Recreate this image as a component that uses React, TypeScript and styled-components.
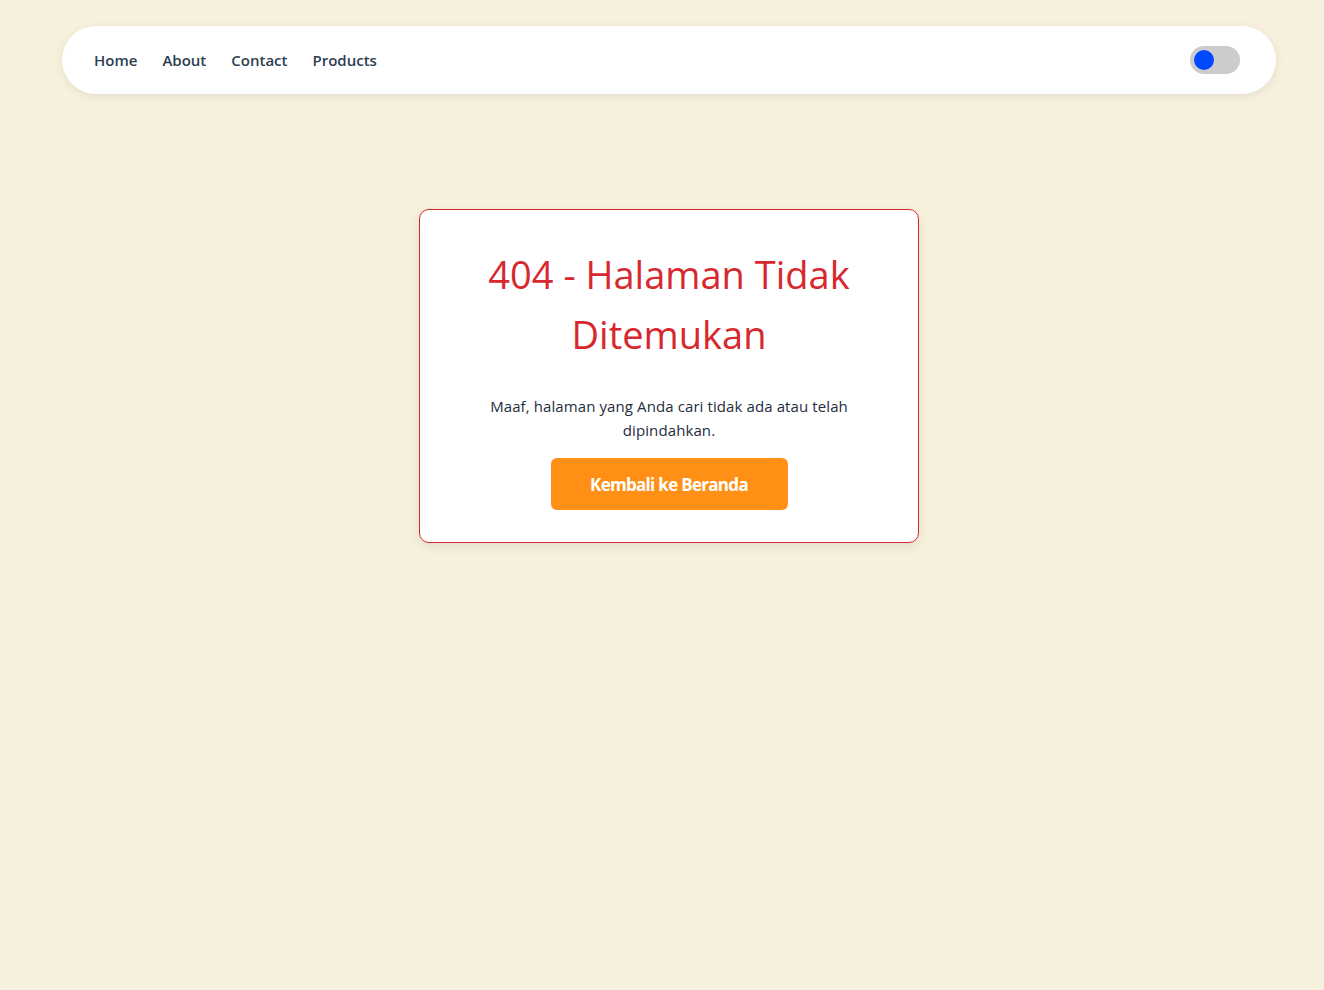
import styled, { createGlobalStyle } from 'styled-components';

const GlobalStyle = createGlobalStyle`
  html, body {
    margin: 0;
    padding: 0;
    background: #f6f0dd;
    font-family: "Open Sans", "Noto Sans", sans-serif;
  }
  * { box-sizing: border-box; }
`;

const Page = styled.div`
  min-height: 990px;
  padding: 26px 48px 0 62px;
`;

const Nav = styled.nav`
  height: 68px;
  width: 1214px;
  background: #ffffff;
  border-radius: 34px;
  box-shadow: 0 2px 10px rgba(0, 0, 0, 0.08);
  display: flex;
  align-items: center;
  justify-content: space-between;
  padding: 0 36px 0 32px;
`;

const Links = styled.ul`
  list-style: none;
  margin: 0;
  padding: 0;
  display: flex;
  gap: 25px;
`;

const Link = styled.a`
  font-size: 15px;
  font-weight: 600;
  color: #2c3e50;
  text-decoration: none;
`;

const Toggle = styled.label<{ $on: boolean }>`
  width: 50px;
  height: 28px;
  border-radius: 14px;
  background: #cccccc;
  display: flex;
  align-items: center;
  justify-content: ${({ $on }) => ($on ? 'flex-end' : 'flex-start')};
  padding: 0 4px;
`;

const Knob = styled.span`
  width: 20px;
  height: 20px;
  border-radius: 50%;
  background: #0049ff;
`;

const Main = styled.main`
  display: flex;
  justify-content: center;
  padding-top: 115px;
`;

const Card = styled.section`
  width: 500px;
  background: #ffffff;
  border: 1px solid #d7282f;
  border-radius: 10px;
  box-shadow: 0 4px 12px rgba(0, 0, 0, 0.08);
  padding: 34px 48px 32px;
  display: flex;
  flex-direction: column;
  align-items: center;
  text-align: center;
`;

const Title = styled.h1`
  margin: 0 0 30px;
  font-size: 38px;
  line-height: 60px;
  font-weight: 400;
  color: #d7282f;
  max-width: 380px;
`;

const Message = styled.p`
  margin: 0 0 16px;
  font-size: 15px;
  line-height: 24px;
  color: #1f2d3d;
  max-width: 370px;
  letter-spacing: 0.1px;
`;

const Button = styled.a`
  display: flex;
  align-items: center;
  justify-content: center;
  width: 237px;
  height: 52px;
  border-radius: 6px;
  background: #ff9015;
  color: #ffffff;
  font-size: 17px;
  font-weight: 700;
  text-decoration: none;
  letter-spacing: -0.7px;
`;

export default function App() {
  const links = ['Home', 'About', 'Contact', 'Products'];
  return (
    <>
      <GlobalStyle />
      <Page>
        <Nav>
          <Links>
            {links.map((l) => (
              <li key={l}>
                <Link href="#">{l}</Link>
              </li>
            ))}
          </Links>
          <Toggle $on={false}>
            <Knob />
          </Toggle>
        </Nav>
        <Main>
          <Card>
            <Title>404 - Halaman Tidak Ditemukan</Title>
            <Message>
              Maaf, halaman yang Anda cari tidak ada atau telah dipindahkan.
            </Message>
            <Button href="#">Kembali ke Beranda</Button>
          </Card>
        </Main>
      </Page>
    </>
  );
}
